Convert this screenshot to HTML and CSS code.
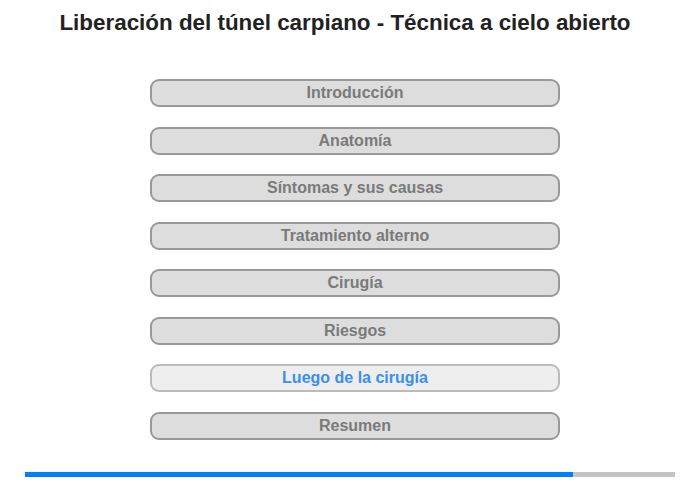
FILE: index.html
```html
<!DOCTYPE html>
<html lang="es">
<head>
    <meta charset="UTF-8">
    <meta name="viewport" content="width=device-width, initial-scale=1.0">
    <title>Liberación del túnel carpiano</title>
    <link rel="stylesheet" href="styles.css">
</head>
<body>
    <div class="page">
        <h1>Liberación del túnel carpiano - Técnica a cielo abierto</h1>

        <ul class="menu">
            <li><button class="menu-btn">Introducción</button></li>
            <li><button class="menu-btn">Anatomía</button></li>
            <li><button class="menu-btn">Síntomas y sus causas</button></li>
            <li><button class="menu-btn">Tratamiento alterno</button></li>
            <li><button class="menu-btn">Cirugía</button></li>
            <li><button class="menu-btn">Riesgos</button></li>
            <li><button class="menu-btn active">Luego de la cirugía</button></li>
            <li><button class="menu-btn">Resumen</button></li>
        </ul>

        <div class="progress">
            <div class="progress-fill" style="width: 84.3%"></div>
        </div>
    </div>
</body>
</html>
```

FILE: styles.css
```css
body {
    font-family: "Liberation Sans", Arial, sans-serif;
    margin: 0;
    padding: 0;
    background-color: #fff;
}

.page {
    width: 700px;
    height: 480px;
    display: flex;
    flex-direction: column;
}

h1 {
    font-size: 22.4px;
    font-weight: bold;
    color: #222;
    text-align: center;
    margin: 10px 10px 0 0;
    line-height: 26px;
}

.menu {
    list-style: none;
    margin: 43px 0 0 150px;
    padding: 0;
    width: 410px;
    display: flex;
    flex-direction: column;
    gap: 19.5px;
}

.menu-btn {
    display: block;
    width: 100%;
    height: 28px;
    font-family: "Liberation Sans", Arial, sans-serif;
    font-size: 16px;
    font-weight: bold;
    color: #7a7a7a;
    background-color: #dddddd;
    border: 2px solid #999;
    border-radius: 9px;
    padding: 0;
    cursor: pointer;
}

.menu-btn.active {
    color: #3a8ef0;
    background-color: #eeeeee;
    border-color: #bbb;
}

.progress {
    margin: 32px 0 0 25px;
    width: 650px;
    height: 5px;
    background-color: #c4c4c4;
}

.progress-fill {
    height: 100%;
    background-color: #0080ff;
}
```
